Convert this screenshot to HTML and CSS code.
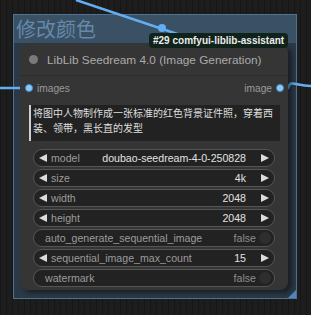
FILE: index.html
```html
<!DOCTYPE html>
<html lang="en">
<head>
    <meta charset="UTF-8">
    <title>修改颜色</title>
    <link rel="stylesheet" href="styles.css">
</head>
<body>
    <div class="canvas">
        <div class="group">
            <div class="group-title">修改颜色</div>
            <div class="group-resize"></div>
        </div>

        <svg class="links" width="311" height="315" viewBox="0 0 311 315">
            <path d="M76 0 L225 50" />
            <circle cx="162" cy="28" r="4" />
            <path d="M0 88 L29 88" />
            <path d="M280 88 L288 88 C291 79, 295 86, 311 86" />
        </svg>

        <div class="node">
            <div class="node-title">
                <span class="node-dot"></span>
                <span class="node-name">LibLib Seedream 4.0 (Image Generation)</span>
            </div>
            <div class="slots">
                <div class="slot">
                    <span class="slot-dot"></span>
                    <span>images</span>
                </div>
                <div class="slot">
                    <span>image</span>
                    <span class="slot-dot"></span>
                </div>
            </div>
            <div class="prompt">
                <div>将图中人物制作成一张标准的红色背景证件照，穿着西</div>
                <div>装、领带，黑长直的发型</div>
            </div>
            <div class="widgets">
                <div class="widget">
                    <span class="arrow-left"></span>
                    <span class="w-label">model</span>
                    <span class="w-value">doubao-seedream-4-0-250828</span>
                    <span class="arrow-right"></span>
                </div>
                <div class="widget">
                    <span class="arrow-left"></span>
                    <span class="w-label">size</span>
                    <span class="w-value">4k</span>
                    <span class="arrow-right"></span>
                </div>
                <div class="widget">
                    <span class="arrow-left"></span>
                    <span class="w-label">width</span>
                    <span class="w-value">2048</span>
                    <span class="arrow-right"></span>
                </div>
                <div class="widget">
                    <span class="arrow-left"></span>
                    <span class="w-label">height</span>
                    <span class="w-value">2048</span>
                    <span class="arrow-right"></span>
                </div>
                <div class="widget toggle">
                    <span class="w-label">auto_generate_sequential_image</span>
                    <span class="w-value off">false</span>
                    <span class="knob"></span>
                </div>
                <div class="widget">
                    <span class="arrow-left"></span>
                    <span class="w-label">sequential_image_max_count</span>
                    <span class="w-value">15</span>
                    <span class="arrow-right"></span>
                </div>
                <div class="widget toggle">
                    <span class="w-label">watermark</span>
                    <span class="w-value off">false</span>
                    <span class="knob"></span>
                </div>
            </div>
        </div>

        <div class="badge">#29 comfyui-liblib-assistant</div>
    </div>
</body>
</html>
```

FILE: styles.css
```css
body {
    margin: 0;
    background: #1c1c1c;
    font-family: "Liberation Sans", Arial, sans-serif;
}

.canvas {
    position: relative;
    width: 311px;
    height: 315px;
    overflow: hidden;
    background-color: #1d1d1d;
    background-image: repeating-linear-gradient(90deg, rgba(0, 0, 0, 0.25) 0 1px, transparent 1px 6px);
}

/* group frame */
.group {
    position: absolute;
    left: 13px;
    top: 14px;
    width: 282px;
    height: 283px;
    border: 1px solid #4f7293;
    background: #2b3946;
}

.group-title {
    height: 28px;
    background: #3a5064;
    color: #6489aa;
    font-family: "Noto Sans CJK SC", sans-serif;
    font-size: 20px;
    line-height: 27px;
    padding-left: 2px;
}

.group-resize {
    position: absolute;
    right: 0;
    bottom: 0;
    width: 0;
    height: 0;
    border-left: 8px solid transparent;
    border-bottom: 8px solid #4c87bd;
}

.links {
    position: absolute;
    left: 0;
    top: 0;
}

.links path {
    fill: none;
    stroke: #62aef0;
    stroke-width: 2.5;
}

.links circle {
    fill: #62aef0;
}

/* node */
.node {
    position: absolute;
    left: 20px;
    top: 44px;
    width: 268px;
    height: 246px;
    background: #353535;
    border-radius: 8px;
    box-shadow: 4px 3px 5px rgba(0, 0, 0, 0.45);
    display: flex;
    flex-direction: column;
}

.node-title {
    height: 31px;
    border-bottom: 1px solid #2d2d2d;
    display: flex;
    align-items: center;
    padding-left: 9px;
    gap: 9px;
}

.node-dot {
    width: 9px;
    height: 9px;
    border-radius: 50%;
    background: #7a7a7a;
}

.node-name {
    color: #ababab;
    font-size: 11.8px;
}

.slots {
    height: 16px;
    margin-top: 4px;
    display: flex;
    justify-content: space-between;
    align-items: center;
    padding: 0 4px 0 5px;
    color: #9a9a9a;
    font-size: 10.2px;
}

.slot {
    display: flex;
    align-items: center;
    gap: 4px;
}

.slot-dot {
    width: 6px;
    height: 6px;
    border-radius: 50%;
    background: #8fc8f5;
    border: 1.5px solid #3e8fd6;
}

.prompt {
    margin: 9px 8px 0 9px;
    height: 36px;
    box-sizing: border-box;
    background: #222;
    border-left: 2px solid #cfcfcf;
    padding: 1px 0 0 2px;
    color: #dedede;
    font-family: "Noto Sans CJK SC", sans-serif;
    font-size: 10px;
    line-height: 14.5px;
}

.widgets {
    margin: 8px 13px 0 13px;
    display: flex;
    flex-direction: column;
    gap: 2px;
}

.widget {
    height: 18px;
    box-sizing: border-box;
    border: 1px solid #555;
    border-radius: 9px;
    background: #222;
    display: flex;
    align-items: center;
    padding: 0 5px 0 5px;
    font-size: 10.6px;
}

.arrow-left {
    width: 0;
    height: 0;
    border-top: 4.5px solid transparent;
    border-bottom: 4.5px solid transparent;
    border-right: 8px solid #dcdcdc;
    margin-right: 4px;
}

.arrow-right {
    width: 0;
    height: 0;
    border-top: 4.5px solid transparent;
    border-bottom: 4.5px solid transparent;
    border-left: 8px solid #dcdcdc;
    margin-left: 15px;
}

.w-label {
    color: #9c9c9c;
    flex: 1;
    white-space: nowrap;
}

.w-value {
    color: #e2e2e2;
}

.toggle {
    padding-left: 11px;
    padding-right: 3px;
}

.w-value.off {
    color: #8e8e8e;
}

.knob {
    width: 12px;
    height: 12px;
    border-radius: 50%;
    background: #2e2e2e;
    margin-left: 3px;
}

.badge {
    position: absolute;
    left: 149px;
    top: 33px;
    height: 15px;
    padding: 0 4px;
    border-radius: 4px;
    background: #10231a;
    color: #ececec;
    font-size: 10px;
    font-weight: bold;
    line-height: 15px;
}
```
